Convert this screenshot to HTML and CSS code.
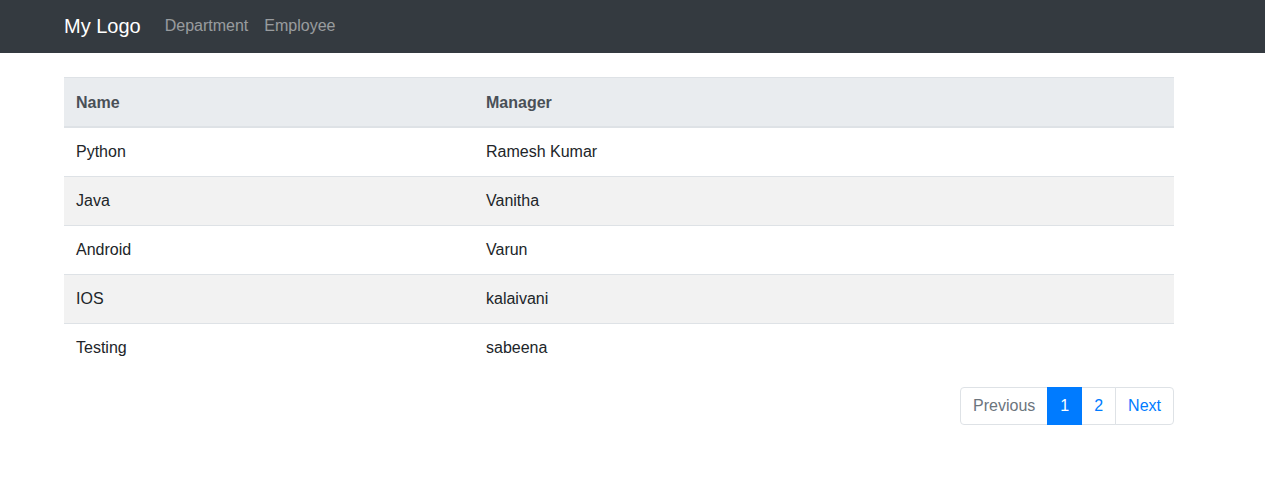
FILE: index.html
```html
<!DOCTYPE html>
<html lang="en">
<head>
<meta charset="utf-8">
<title>Departments</title>
<link rel="stylesheet" href="styles.css">
</head>
<body>
<nav class="navbar">
  <div class="container nav-inner">
    <a class="brand" href="#">My Logo</a>
    <ul class="nav-links">
      <li><a href="#">Department</a></li>
      <li><a href="#">Employee</a></li>
    </ul>
  </div>
</nav>
<main class="container content">
  <table class="table">
    <thead>
      <tr><th class="col-name">Name</th><th>Manager</th></tr>
    </thead>
    <tbody>
      <tr><td>Python</td><td>Ramesh Kumar</td></tr>
      <tr><td>Java</td><td>Vanitha</td></tr>
      <tr><td>Android</td><td>Varun</td></tr>
      <tr><td>IOS</td><td>kalaivani</td></tr>
      <tr><td>Testing</td><td>sabeena</td></tr>
    </tbody>
  </table>
  <ul class="pagination">
    <li class="page disabled"><span>Previous</span></li>
    <li class="page active"><span>1</span></li>
    <li class="page"><a href="#">2</a></li>
    <li class="page"><a href="#">Next</a></li>
  </ul>
</main>
</body>
</html>
```
FILE: styles.css
```css
* { box-sizing: border-box; }
html, body { margin: 0; }
body {
  font-family: "Liberation Sans", Arial, sans-serif;
  font-size: 16px;
  line-height: 1.5;
  color: #212529;
  background: #fff;
}
.container {
  width: 1110px;
  margin-left: 64px;
}
.navbar {
  background: #343a40;
  padding: 8px 0;
}
.nav-inner {
  display: flex;
  align-items: flex-start;
}
.brand {
  font-size: 20px;
  line-height: 30px;
  padding: 3px 0 4px;
  margin-right: 16px;
  color: #fff;
  text-decoration: none;
}
.nav-links {
  display: flex;
  list-style: none;
  margin: 0;
  padding: 0;
}
.nav-links a {
  display: block;
  padding: 6px 8px 4px;
  line-height: 24px;
  color: rgba(255,255,255,.5);
  text-decoration: none;
}
.content { padding-top: 24px; }
.table {
  width: 100%;
  border-collapse: collapse;
  margin-bottom: 15px;
}
.table th, .table td {
  padding: 12px;
  text-align: left;
  vertical-align: top;
  border-top: 1px solid #dee2e6;
}
.table th {
  background: #e9ecef;
  color: #495057;
  font-weight: bold;
  padding: 13px 12px 11px;
  border-bottom: 2px solid #dee2e6;
}
.col-name { width: 410px; }
.table tbody tr:nth-child(even) { background: rgba(0,0,0,.05); }
.pagination {
  display: flex;
  justify-content: flex-end;
  list-style: none;
  margin: 0;
  padding: 0;
}
.page > a, .page > span {
  display: block;
  padding: 6px 12px;
  line-height: 24px;
  border: 1px solid #dee2e6;
  margin-left: -1px;
  color: #007bff;
  text-decoration: none;
  background: #fff;
}
.page:first-child > span { border-radius: 4px 0 0 4px; margin-left: 0; }
.page:last-child > a { border-radius: 0 4px 4px 0; }
.page.disabled > span { color: #6c757d; }
.page.active > span {
  background: #007bff;
  border-color: #007bff;
  color: #fff;
  position: relative;
  z-index: 1;
}
```
